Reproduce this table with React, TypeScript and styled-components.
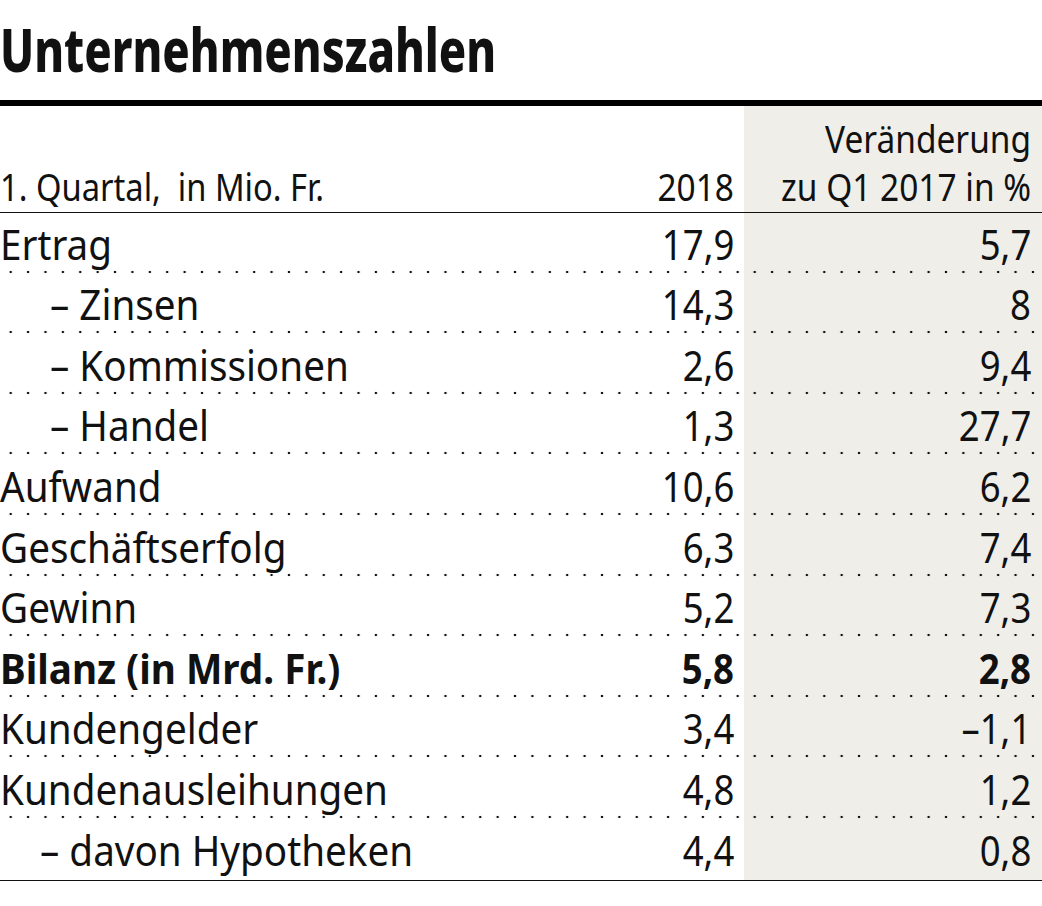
import styled, { createGlobalStyle } from "styled-components";

const GlobalStyle = createGlobalStyle`
  html, body {
    margin: 0;
    padding: 0;
    background: #ffffff;
  }
  body {
    font-family: "Noto Sans", "Open Sans", "Liberation Sans", sans-serif;
    color: #111111;
  }
`;

type Row = {
  label: string;
  value: string;
  change: string;
  indent?: number;
  bold?: boolean;
};

const rows: Row[] = [
  { label: "Ertrag", value: "17,9", change: "5,7" },
  { label: "– Zinsen", value: "14,3", change: "8", indent: 50 },
  { label: "– Kommissionen", value: "2,6", change: "9,4", indent: 50 },
  { label: "– Handel", value: "1,3", change: "27,7", indent: 50 },
  { label: "Aufwand", value: "10,6", change: "6,2" },
  { label: "Geschäftserfolg", value: "6,3", change: "7,4" },
  { label: "Gewinn", value: "5,2", change: "7,3" },
  { label: "Bilanz (in Mrd. Fr.)", value: "5,8", change: "2,8", bold: true },
  { label: "Kundengelder", value: "3,4", change: "–1,1" },
  { label: "Kundenausleihungen", value: "4,8", change: "1,2" },
  { label: "– davon Hypotheken", value: "4,4", change: "0,8", indent: 40 },
];

const Page = styled.div`
  width: 1042px;
  height: 906px;
  overflow: hidden;
`;

const Title = styled.h1`
  margin: 0;
  padding: 19px 0 21px 0;
  font-size: 60px;
  font-weight: 800;
  line-height: 60px;
  border-bottom: 6.5px solid #000;
`;

// condensed look: the installed sans has no narrow cut, so squeeze horizontally
const Squeeze = styled.span<{ $scale: number; $right?: boolean }>`
  display: inline-block;
  white-space: nowrap;
  transform: scaleX(${(p) => p.$scale});
  transform-origin: ${(p) => (p.$right ? "right" : "left")} center;
`;

const Table = styled.div`
  display: grid;
  grid-template-columns: 1fr 104px 298px;
  border-bottom: 1.5px solid #111;
`;

const HeadCell = styled.div<{ $shade?: boolean; $right?: boolean }>`
  height: 107px;
  box-sizing: border-box;
  display: flex;
  flex-direction: column;
  justify-content: flex-end;
  align-items: ${(p) => (p.$right ? "flex-end" : "flex-start")};
  padding: 0 ${(p) => (p.$shade ? "11px" : p.$right ? "10px" : "0")} 2px 0;
  font-size: 38px;
  line-height: 48px;
  background: ${(p) => (p.$shade ? "#efeee9" : "transparent")};
  border-bottom: 1.5px solid #111;
`;

const Cell = styled.div<{ $shade?: boolean; $bold?: boolean; $indent?: number; $last?: boolean }>`
  height: 60.6px;
  box-sizing: border-box;
  display: flex;
  align-items: flex-end;
  justify-content: ${(p) => (p.$indent === undefined ? "flex-end" : "flex-start")};
  padding: 0 ${(p) => (p.$indent !== undefined ? "0" : p.$shade ? "11px" : "10px")} 9px
    ${(p) => p.$indent ?? 0}px;
  font-size: 42px;
  line-height: 42px;
  font-weight: ${(p) => (p.$bold ? 700 : 400)};
  background-color: ${(p) => (p.$shade ? "#efeee9" : "transparent")};
  background-image: ${(p) =>
    p.$last ? "none" : "radial-gradient(circle, #111 1.1px, transparent 1.6px)"};
  background-size: 17.4px 4px;
  background-position: 2px 100%;
  background-repeat: repeat-x;
`;

export default function App() {
  return (
    <Page>
      <GlobalStyle />
      <Title>
        <Squeeze $scale={0.755}>Unternehmenszahlen</Squeeze>
      </Title>
      <Table>
        <HeadCell>
          <Squeeze $scale={0.86}>1. Quartal,&nbsp; in Mio. Fr.</Squeeze>
        </HeadCell>
        <HeadCell $right>
          <Squeeze $scale={0.88} $right>2018</Squeeze>
        </HeadCell>
        <HeadCell $shade $right>
          <Squeeze $scale={0.88} $right>Veränderung</Squeeze>
          <Squeeze $scale={0.88} $right>zu Q1 2017 in %</Squeeze>
        </HeadCell>
        {rows.map((r, i) => {
          const last = i === rows.length - 1;
          return [
            <Cell key={`l${i}`} $indent={r.indent ?? 0} $bold={r.bold} $last={last}>
              <Squeeze $scale={0.92}>{r.label}</Squeeze>
            </Cell>,
            <Cell key={`v${i}`} $bold={r.bold} $last={last}>
              <Squeeze $scale={0.87} $right>{r.value}</Squeeze>
            </Cell>,
            <Cell key={`c${i}`} $shade $bold={r.bold} $last={last}>
              <Squeeze $scale={0.87} $right>{r.change}</Squeeze>
            </Cell>,
          ];
        })}
      </Table>
    </Page>
  );
}
